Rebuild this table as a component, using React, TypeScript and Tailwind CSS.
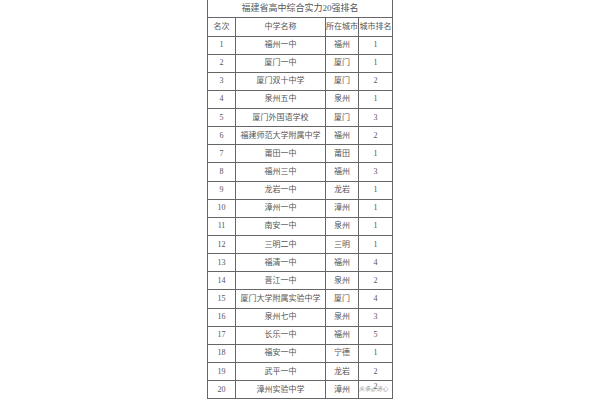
const rows = [
  ['1', '福州一中', '福州', '1'],
  ['2', '厦门一中', '厦门', '1'],
  ['3', '厦门双十中学', '厦门', '2'],
  ['4', '泉州五中', '泉州', '1'],
  ['5', '厦门外国语学校', '厦门', '3'],
  ['6', '福建师范大学附属中学', '福州', '2'],
  ['7', '莆田一中', '莆田', '1'],
  ['8', '福州三中', '福州', '3'],
  ['9', '龙岩一中', '龙岩', '1'],
  ['10', '漳州一中', '漳州', '1'],
  ['11', '南安一中', '泉州', '1'],
  ['12', '三明二中', '三明', '1'],
  ['13', '福清一中', '福州', '4'],
  ['14', '晋江一中', '泉州', '2'],
  ['15', '厦门大学附属实验中学', '厦门', '4'],
  ['16', '泉州七中', '泉州', '3'],
  ['17', '长乐一中', '福州', '5'],
  ['18', '福安一中', '宁德', '1'],
  ['19', '武平一中', '龙岩', '2'],
  ['20', '漳州实验中学', '漳州', '2'],
];

const cell = 'border border-[#666] text-center align-middle p-0 leading-none';

export default function App() {
  return (
    <div className="w-[600px] h-[400px] bg-white overflow-hidden font-['Liberation_Serif','Noto_Sans_CJK_SC',serif] text-[#555]">
      <div className="relative w-[185px] ml-[207px]">
        <table className="table-fixed border-collapse w-[185px]">
          <colgroup>
            <col className="w-[28px]" />
            <col className="w-[90px]" />
            <col className="w-[33px]" />
            <col className="w-[34px]" />
          </colgroup>
          <tbody>
            <tr className="h-[17px]">
              <td colSpan={4} className={`${cell} border-t-0 text-[9px]`}>
                福建省高中综合实力20强排名
              </td>
            </tr>
            <tr className="h-[19px] text-[8px]">
              <td className={cell}>名次</td>
              <td className={cell}>中学名称</td>
              <td className={`${cell} whitespace-nowrap`}>所在城市</td>
              <td className={`${cell} whitespace-nowrap`}>城市排名</td>
            </tr>
            {rows.map((r, i) => (
              <tr key={i} className="h-[18.15px] text-[8px]">
                <td className={cell}>{r[0]}</td>
                <td className={`${cell} whitespace-nowrap`}>{r[1]}</td>
                <td className={cell}>{r[2]}</td>
                <td className={`${cell} ${i === 19 ? 'align-top pt-[2px]' : ''}`}>{r[3]}</td>
              </tr>
            ))}
          </tbody>
        </table>
        <span className="absolute right-[4px] bottom-[5px] text-[6px] italic text-[#999]">头条@清心</span>
      </div>
    </div>
  );
}
